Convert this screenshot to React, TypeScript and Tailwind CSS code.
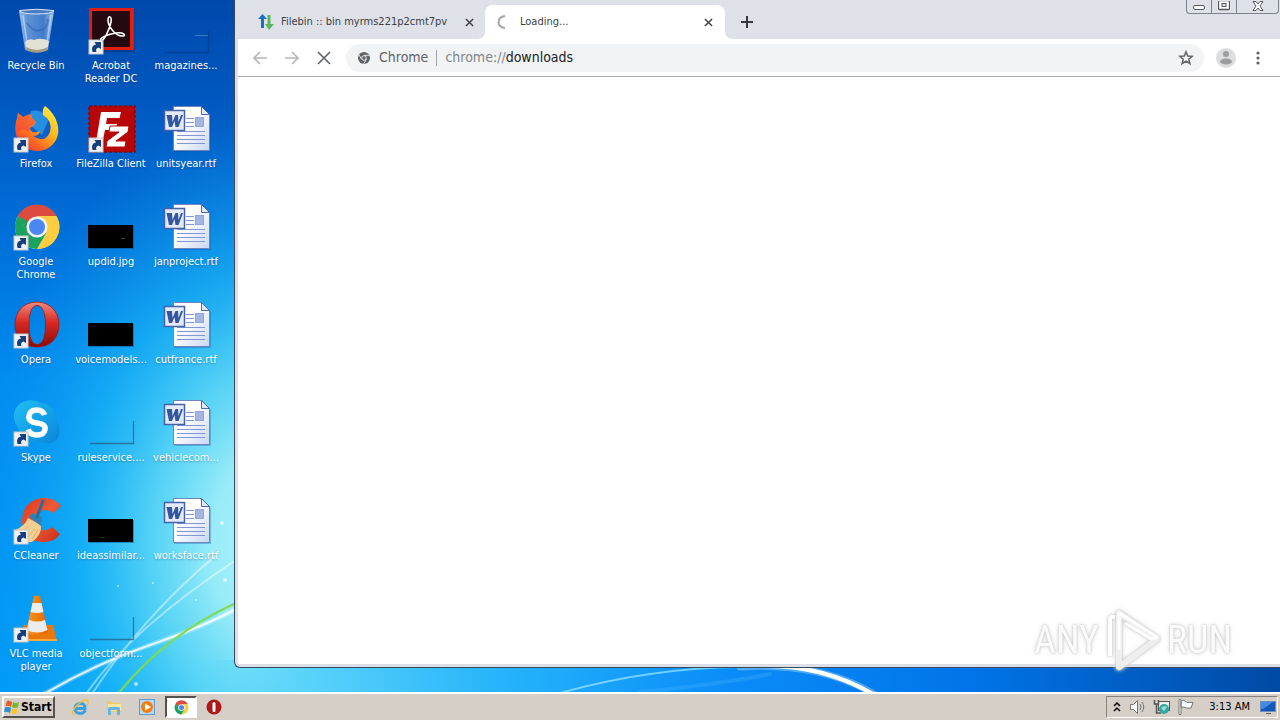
import type { ReactNode } from "react";

type IconKind =
  | "bin" | "acrobat" | "faint" | "firefox" | "filezilla" | "word" | "chrome" | "black"
  | "opera" | "skype" | "ccleaner" | "vlc" | "magazine" | "blackMark" | "blackGreen";

type DesktopItem = { label: string; icon: IconKind; shortcut?: boolean };

const items: DesktopItem[] = [
  { label: "Recycle Bin", icon: "bin" },
  { label: "Acrobat Reader DC", icon: "acrobat", shortcut: true },
  { label: "magazines...", icon: "magazine" },
  { label: "Firefox", icon: "firefox", shortcut: true },
  { label: "FileZilla Client", icon: "filezilla", shortcut: true },
  { label: "unitsyear.rtf", icon: "word" },
  { label: "Google Chrome", icon: "chrome", shortcut: true },
  { label: "updid.jpg", icon: "blackMark" },
  { label: "janproject.rtf", icon: "word" },
  { label: "Opera", icon: "opera", shortcut: true },
  { label: "voicemodels...", icon: "black" },
  { label: "cutfrance.rtf", icon: "word" },
  { label: "Skype", icon: "skype", shortcut: true },
  { label: "ruleservice....", icon: "faint" },
  { label: "vehiclecom...", icon: "word" },
  { label: "CCleaner", icon: "ccleaner", shortcut: true },
  { label: "ideassimilar...", icon: "blackGreen" },
  { label: "worksface.rtf", icon: "word" },
  { label: "VLC media player", icon: "vlc", shortcut: true },
  { label: "objectform...", icon: "faint" },
];

function Defs() {
  return (
    <svg className="absolute size-0" aria-hidden="true">
      <defs>
        <linearGradient id="glass" x1="0" x2="1">
          <stop offset="0" stopColor="#b5cfee" />
          <stop offset=".25" stopColor="#6e9fdc" />
          <stop offset=".7" stopColor="#4c84cf" />
          <stop offset="1" stopColor="#c0d6f2" />
        </linearGradient>
        <linearGradient id="ff" x1=".9" y1="0" x2=".1" y2="1">
          <stop offset="0" stopColor="#fff14a" />
          <stop offset=".4" stopColor="#ffb81f" />
          <stop offset=".7" stopColor="#ff6a1f" />
          <stop offset="1" stopColor="#ee2446" />
        </linearGradient>
        <linearGradient id="op" x1="0" y1="0" x2="0" y2="1">
          <stop offset="0" stopColor="#f08a80" />
          <stop offset=".45" stopColor="#d92a22" />
          <stop offset="1" stopColor="#8c0a08" />
        </linearGradient>
        <linearGradient id="sk" x1="0" y1="0" x2="1" y2="1">
          <stop offset="0" stopColor="#1fc0f4" />
          <stop offset="1" stopColor="#0a84dc" />
        </linearGradient>
        <linearGradient id="cc" x1="0" y1="0" x2="1" y2="1">
          <stop offset="0" stopColor="#d8381e" />
          <stop offset=".5" stopColor="#ee5a36" />
          <stop offset="1" stopColor="#c52a18" />
        </linearGradient>
        <linearGradient id="page" x1="0" y1="0" x2="1" y2="1">
          <stop offset=".4" stopColor="#ffffff" />
          <stop offset="1" stopColor="#c9d6f3" />
        </linearGradient>
        <linearGradient id="cone" x1="0" x2="1">
          <stop offset="0" stopColor="#ff9a1c" />
          <stop offset="1" stopColor="#e06400" />
        </linearGradient>
      </defs>
    </svg>
  );
}

function ChromeArt() {
  return (
    <>
      <circle cx="24" cy="24" r="22" fill="#f2f2f2" />
      <path d="M24 24 4.9 13A22 22 0 0 1 43.1 13Z" fill="#dd4b3e" />
      <path d="M24 13H43.5A22 22 0 0 1 24 46L33.5 29.5Z" fill="#ffcd40" />
      <path d="M4.9 13A22 22 0 0 0 24 46L33.5 29.5 24 34 14.5 29.5Z" fill="#1aa260" />
      <path d="M4.9 13A22 22 0 0 1 43.5 13H24A11 11 0 0 0 14.5 29.5Z" fill="#dd4b3e" />
      <path d="M4.9 13 14.5 29.5 18 20Z" fill="#1aa260" />
      <circle cx="24" cy="24" r="10.5" fill="#f5f5f5" />
      <circle cx="24" cy="24" r="8" fill="#4b87f0" />
    </>
  );
}

function Art({ kind }: { kind: IconKind }): ReactNode {
  switch (kind) {
    case "bin":
      return (
        <g>
          <path d="M7 4 13 43Q24 48 36 43L42 4Z" fill="url(#glass)" fillOpacity=".85" />
          <path d="M13 35Q17 31 22 33 29 30 37 34L35.500 42Q25 47 14 42Z" fill="#e3e0d6" />
          <path d="M14 40Q25 46 36 40L35 43.500Q25 48 15 43.500Z" fill="#a59a82" />
          <path d="M7.500 3.500Q24 1 42 3.500 40 7 24.500 7T7.500 3.500Z" fill="#4a7cc2" stroke="#dbe8f8" />
          <path d="M11 8 15 36M39 8 35 36" stroke="#d5e5f8" strokeWidth="1.500" opacity=".6" />
          <path d="M15 16Q22 26 29 23 36 21 36 12" stroke="#2557a3" strokeWidth="2" fill="none" opacity=".45" />
        </g>
      );
    case "acrobat":
      return (
        <g>
          <rect x="3" y="2" width="45" height="43" fill="#0a2a66" opacity=".4" />
          <rect x="2" y="1" width="45" height="42" fill="#e21d12" />
          <rect x="5" y="4" width="38" height="36" fill="#240a10" />
          <path
            d="M14 33C12 31 21 27 29 26 37 25 40 29 35 29 28 29 21 19 21 13 21 8 25 9 24 15 23 21 17 35 14 33Z"
            fill="none" stroke="#fff" strokeWidth="1.600"
          />
        </g>
      );
    case "magazine":
      return (
        <g fill="none">
          <path d="M2 45.500H46.500V24" stroke="#003c8c" strokeWidth="1.500" opacity=".7" />
          <path d="M33 28.500H46" stroke="#6f8fd0" opacity=".6" />
        </g>
      );
    case "faint":
      return <path d="M3 44.500H46.500V22" fill="none" stroke="#245f84" strokeWidth="1.300" opacity=".75" />;
    case "black":
    case "blackMark":
    case "blackGreen":
      return (
        <g>
          <rect x="2" y="23" width="45" height="23" fill="#063a70" opacity=".4" />
          <rect x="1" y="22" width="45" height="23" fill="#000" />
          {kind === "blackMark" && <path d="M34 35.500h4" stroke="#444" />}
          {kind === "blackGreen" && <path d="M13 40.500h5" stroke="#1d3a1d" />}
        </g>
      );
    case "firefox":
      return (
        <g>
          <circle cx="25" cy="21" r="16" fill="#145fc4" />
          <path d="M19 6Q32 3 36 16L30 30 18 20Z" fill="#2490e4" />
          <path
            d="M33 1C44 9 50 24 44 35 38 46 24 49 14 43 4 37 1 25 5 13L6 8 11 12 19 9 20 13 24 17 22 20 18 23Q18 28 25 27L28 26Q27 31 21 31 33 39 38 27 41 16 31 10 30 4 33 1Z"
            fill="url(#ff)"
          />
          <path d="M5 13 6 8 11 12 19 9 20 13 24 17 18 23 17 27Q9 22 5 28 3 22 5 13Z" fill="#f2453c" opacity=".65" />
        </g>
      );
    case "filezilla":
      return (
        <g>
          <rect x="2" y="1" width="46" height="46" fill="#b80608" stroke="#870808" strokeWidth="1.500" strokeDasharray="3 2" />
          <path d="M14 7H34L32.500 13H20L19 19H30L28.500 25H18L15.500 37H9Z" fill="#fff" />
          <path d="M23 21H42L41 27 29 36H39L38 42H19L20 36 32 27H22Z" fill="#fff" stroke="#b80608" strokeWidth="1" />
        </g>
      );
    case "word":
      return (
        <g>
          <path d="M12 3H41L49 11V47H12Z" fill="#17479a" opacity=".3" />
          <path d="M11.500 1.500H39.500L47.500 9.500V45.500H11.500Z" fill="url(#page)" stroke="#6e84bd" />
          <path d="M39.500 1.500V9.500H47.500Z" fill="#dfe8fb" stroke="#4f68a8" />
          <path d="M24 13.500h8M24 17.500h8M24 21.500h8M15 26.500h28M15 30.500h28M15 34.500h28M15 38.500h28" stroke="#8197cf" />
          <rect x="33.500" y="12.500" width="8" height="9" fill="#a3b5e0" stroke="#8fa4d8" />
          <rect x="2.500" y="5.500" width="20" height="20" fill="#e3ebfb" stroke="#4561a8" strokeWidth="1.500" />
          <path d="M4.500 10H10L10.500 17 13.500 10H16L16.500 17 19 10H21L16.500 22H13.500L12.500 16 10 22H7Z" fill="#33569f" />
        </g>
      );
    case "chrome":
      return <g transform="translate(1 0)"><ChromeArt /></g>;
    case "opera":
      return (
        <path
          d="M25 1C11 1 3 11 3 23.500S11 46 25 46 47 36 47 23.500 38 1 25 1ZM25 4.500C31 4.500 33.500 13 33.500 24S31 43.500 25 43.500 17 34 17 24 19 4.500 25 4.500Z"
          fill="url(#op)" fillRule="evenodd" stroke="#a01812" strokeWidth=".8"
        />
      );
    case "skype":
      return (
        <g>
          <path d="M14 2Q22 0 29 4 43 5 44 21 50 31 46 39 40 47 30 43 12 45 6 29-1 18 4 9 8 3 14 2Z" fill="url(#sk)" />
          <path d="M32.500 16Q31 11 24.500 11T17 17 25 24 33 30.500 25 36 16 30.500" fill="none" stroke="#fff" strokeWidth="5.500" />
        </g>
      );
    case "ccleaner":
      return (
        <g>
          <path d="M49 9Q42 0 30 1 10 4 10 25 12 44 30 45 42 46 48 37L40 30Q36 34 31 33 23 31 24 23 25 14 33 13 38 13 41 16Z" fill="url(#cc)" />
          <path d="M3 33Q13 29 16 21L29 28Q30 38 20 45L6 46Z" fill="#f4cf92" />
          <path d="M9 36 17 29M15 41 23 32M20 42 26 33" stroke="#dcb273" />
          <path d="M17 20 20 16 30 20 29 29Z" fill="#2d83b5" />
          <path d="M25 20 31 4" stroke="#286c9c" strokeWidth="3" strokeLinecap="round" />
        </g>
      );
    case "vlc":
      return (
        <g>
          <path d="M12 30H41L45 46H8Z" fill="#e9770b" />
          <path d="M9 44H44.500L45 46H8Z" fill="#ffa836" />
          <path d="M22 1Q25 0 28 1L36 37Q25 43 14 37Z" fill="url(#cone)" />
          <path d="M20.500 8H29.500L31.500 17Q25 19 18.500 17ZM17 25Q25 28 33 25L35.500 35Q25 40 15 35Z" fill="#ececec" />
        </g>
      );
  }
}

function DesktopIcon({ item }: { item: DesktopItem }) {
  return (
    <button type="button" className="flex h-[98px] flex-col items-center text-center">
      <svg viewBox="0 0 48 48" className="size-12 shrink-0 overflow-visible" aria-hidden="true">
        <Art kind={item.icon} />
        {item.shortcut && (
          <g>
            <rect x="2" y="33" width="14" height="14" fill="#f1f1f1" stroke="#c4c8ce" />
            <path d="M5.500 45Q3.500 38.500 9 37.500L7.500 35H14V42L11.500 40.500Q8 41.500 9.500 45Z" fill="#163f80" />
          </g>
        )}
      </svg>
      <span className="mt-1 text-[11px] leading-[13px] text-white [text-shadow:0_1px_2px_rgba(0,40,90,.4)]">
        {item.label}
      </span>
    </button>
  );
}

function Wallpaper() {
  return (
    <svg className="absolute inset-0 size-full" viewBox="0 0 1280 692" preserveAspectRatio="none" aria-hidden="true">
      <defs>
        <linearGradient id="sky" x1="0" y1="0" x2="0" y2="1">
          <stop offset="0" stopColor="#0048ac" />
          <stop offset=".28" stopColor="#0068d2" />
          <stop offset=".55" stopColor="#008cf0" />
          <stop offset="1" stopColor="#009cf8" />
        </linearGradient>
        <radialGradient id="glow" gradientUnits="userSpaceOnUse" cx="0" cy="0" r="1" gradientTransform="translate(280 545) scale(310 440)">
          <stop offset="0" stopColor="#b0f4fa" />
          <stop offset=".22" stopColor="#98ecf8" />
          <stop offset=".42" stopColor="#5cd8f6" stopOpacity=".9" />
          <stop offset=".65" stopColor="#20bef8" stopOpacity=".6" />
          <stop offset="1" stopColor="#1094ea" stopOpacity="0" />
        </radialGradient>
        <linearGradient id="strip" x1="0" x2="1">
          <stop offset="0" stopColor="#5cd8fa" stopOpacity="0" />
          <stop offset=".12" stopColor="#58d2fa" />
          <stop offset=".3" stopColor="#24b2fa" />
          <stop offset=".5" stopColor="#0a8cf8" />
          <stop offset=".72" stopColor="#0074e8" />
          <stop offset="1" stopColor="#004aa4" />
        </linearGradient>
      </defs>
      <rect width="1280" height="692" fill="url(#sky)" />
      <rect width="700" height="692" fill="url(#glow)" />
      <rect x="180" y="660" width="1100" height="32" fill="url(#strip)" />
      <g fill="none" strokeLinecap="round">
        <path d="M44 694Q95 664 150 645T236 609" stroke="#fff" strokeWidth="5" opacity=".25" />
        <path d="M44 694Q95 664 150 645T236 609" stroke="#fff" strokeWidth="2" opacity=".8" />
        <path d="M86 694Q130 630 236 560M92 694Q140 620 215 556" stroke="#fff" strokeWidth="2" opacity=".45" />
        <path d="M118 694Q165 635 236 603" stroke="#7fdc50" strokeWidth="2" />
        <path d="M560 693Q650 668 740 667" stroke="#8be0ff" strokeWidth="2" opacity=".8" />
        <path d="M740 667Q820 662 874 694" stroke="#fff" strokeWidth="7" opacity=".3" />
        <path d="M760 666Q820 664 873 694" stroke="#fff" strokeWidth="4" />
        <path d="M640 692Q720 684 770 674" stroke="#4ab2ff" strokeWidth="4" opacity=".3" />
      </g>
      <g fill="#fff" opacity=".6">
        <circle cx="222" cy="523" r="2" /><circle cx="225" cy="580" r="2" /><circle cx="118" cy="586" r="1" />
        <circle cx="153" cy="583" r="1" /><circle cx="136" cy="684" r="2" /><circle cx="196" cy="600" r="1" />
      </g>
    </svg>
  );
}

function CloseGlyph({ className }: { className: string }) {
  return (
    <svg viewBox="0 0 10 10" className={className} aria-hidden="true">
      <path d="M1 1 9 9M9 1 1 9" stroke="currentColor" strokeWidth="1.600" />
    </svg>
  );
}

function TabStrip() {
  return (
    <div className="flex h-[39px] items-end bg-[#dee1e8] pl-2">
      <div className="flex h-[34px] w-[239px] items-center pr-[11px] pl-3 text-[#3c4043]">
        <svg viewBox="0 0 16 16" className="size-4" aria-hidden="true">
          <path d="M4.500 0 9 5H6V14H3V5H0Z" fill="#1b6ec2" />
          <path d="M9.500 1H12.500V10H16L11 16 7 10H9.500Z" fill="#5cb85c" />
        </svg>
        <span className="ml-[7px] flex-1 whitespace-nowrap text-[11px]">Filebin :: bin myrms221p2cmt7pv</span>
        <button type="button" aria-label="Close Filebin tab"><CloseGlyph className="size-[9px]" /></button>
      </div>
      <div className="relative flex h-[34px] w-[240px] items-center rounded-t-lg bg-white pr-3 pl-[11px] text-[#3c4043]">
        <svg viewBox="0 0 8 8" className="absolute bottom-0 -left-2 size-2" aria-hidden="true"><path d="M8 0V8H0Q8 8 8 0Z" fill="#fff" /></svg>
        <svg viewBox="0 0 8 8" className="absolute -right-2 bottom-0 size-2" aria-hidden="true"><path d="M0 0V8H8Q0 8 0 0Z" fill="#fff" /></svg>
        <svg viewBox="0 0 16 16" className="size-4" aria-hidden="true">
          <path d="M9 2Q2.500 3 2.500 8T9 14" fill="none" stroke="#a6a8ab" strokeWidth="2" />
        </svg>
        <span className="ml-2 flex-1 text-[11px]">Loading...</span>
        <button type="button" aria-label="Close Loading tab"><CloseGlyph className="size-[9px]" /></button>
      </div>
      <button type="button" aria-label="New tab" className="flex h-[34px] w-11 items-center justify-center text-[#35383c]">
        <svg viewBox="0 0 12 12" className="size-3" aria-hidden="true"><path d="M6 0V12M0 6H12" stroke="currentColor" strokeWidth="2" /></svg>
      </button>
      <div className="mr-px ml-auto flex h-[14px] self-start rounded-b border border-t-0 border-[#7d838c] text-[#55595f]">
        <button type="button" aria-label="Minimize" className="flex w-6 items-center justify-center">
          <svg viewBox="0 0 12 12" className="size-3" aria-hidden="true"><rect x=".5" y="4.500" width="11" height="4" rx="1.500" fill="#fff" stroke="currentColor" /></svg>
        </button>
        <button type="button" aria-label="Restore" className="flex w-[26px] items-center justify-center border-x border-[#7d838c]">
          <svg viewBox="0 0 12 12" className="size-3" aria-hidden="true">
            <rect x=".5" y="-.5" width="11" height="9" rx="1" fill="#fff" stroke="currentColor" strokeWidth="1.300" /><rect x="4" y="2.500" width="4" height="3" fill="#dee1e8" stroke="currentColor" />
          </svg>
        </button>
        <button type="button" aria-label="Close" className="flex w-[41px] items-center justify-center">
          <svg viewBox="0 0 12 12" className="size-3" aria-hidden="true">
            <path d="M1 .5H4L6 3 8 .5H11L8 5 11 9.500H8L6 7 4 9.500H1L4 5Z" fill="#fff" stroke="currentColor" />
          </svg>
        </button>
      </div>
    </div>
  );
}

function Toolbar() {
  return (
    <div className="flex h-[38px] items-center border-b border-[#a9abae] bg-white pr-[14px] pl-[14px]">
      <button type="button" aria-label="Back" className="text-[#b4b6b9]">
        <svg viewBox="0 0 16 16" className="size-4" aria-hidden="true"><path d="M15 8H2M8 2 2 8 8 14" fill="none" stroke="currentColor" strokeWidth="1.600" /></svg>
      </button>
      <button type="button" aria-label="Forward" className="ml-4 text-[#b4b6b9]">
        <svg viewBox="0 0 16 16" className="size-4" aria-hidden="true"><path d="M1 8H14M8 2 14 8 8 14" fill="none" stroke="currentColor" strokeWidth="1.600" /></svg>
      </button>
      <button type="button" aria-label="Stop" className="ml-[17px] text-[#5f6368]">
        <svg viewBox="0 0 14 14" className="size-[14px]" aria-hidden="true"><path d="M1 1 13 13M13 1 1 13" stroke="currentColor" strokeWidth="1.600" /></svg>
      </button>
      <div className="ml-[15px] flex h-7 min-w-0 flex-1 items-center rounded-full bg-[#f1f3f4] pr-[10px] pl-3 text-[14px] text-[#5f6368]">
        <svg viewBox="0 0 12 12" className="size-3" aria-hidden="true">
          <circle cx="6" cy="6" r="6" fill="#5f6368" />
          <path d="M6 3.300H11.300M3.700 7.400 1 2.800M8.400 7.300 5.700 11.800" stroke="#f1f3f4" strokeWidth=".9" />
          <circle cx="6" cy="6" r="2.300" fill="#5f6368" stroke="#f1f3f4" strokeWidth=".9" />
        </svg>
        <span className="ml-[9px]">Chrome</span>
        <span className="mx-2 h-4 w-px bg-[#a0a3a7]" />
        <span className="flex-1 text-[#80868b]">chrome://<span className="text-[#202124]">downloads</span></span>
        <button type="button" aria-label="Bookmark this page">
          <svg viewBox="0 0 16 16" className="size-4" aria-hidden="true">
            <path d="M8 1.800 9.700 6 14.200 6.300 10.800 9.200 11.900 13.700 8 11.200 4.100 13.700 5.200 9.200 1.800 6.300 6.300 6Z" fill="none" stroke="currentColor" strokeWidth="1.500" />
          </svg>
        </button>
      </div>
      <button type="button" aria-label="Profile" className="ml-3">
        <svg viewBox="0 0 20 20" className="size-5" aria-hidden="true">
          <circle cx="10" cy="10" r="10" fill="#dcdddf" /><circle cx="10" cy="6" r="3" fill="#9b9da1" /><ellipse cx="10" cy="13.500" rx="6" ry="3" fill="#9b9da1" />
        </svg>
      </button>
      <button type="button" aria-label="Menu" className="ml-[14px]">
        <svg viewBox="0 0 16 16" className="size-4" aria-hidden="true" fill="#5f6368">
          <circle cx="8" cy="3" r="1.600" /><circle cx="8" cy="8" r="1.600" /><circle cx="8" cy="13" r="1.600" />
        </svg>
      </button>
    </div>
  );
}

function Watermark() {
  return (
    <div className="pointer-events-none absolute right-12 bottom-5 flex items-center text-[38px] leading-none text-[#fbfbfb] [filter:drop-shadow(0_0_1px_#c4c4c4)_drop-shadow(0_0_2px_#dddddd)] font-['Roboto_Condensed','Liberation_Sans',sans-serif]">
      <span>ANY</span>
      <svg viewBox="0 0 56 64" className="mx-[6px] h-16 w-14" aria-hidden="true">
        <path d="M5 48V12Q5 8 10 9" fill="none" stroke="#fff" strokeWidth="4" />
        <path d="M14 5V59L52 31Z" fill="none" stroke="#eeeeee" strokeWidth="6" strokeLinejoin="round" />
        <path d="M14 42V5L52 29 46 31 20 15" fill="none" stroke="#fff" strokeWidth="3" strokeLinejoin="round" />
      </svg>
      <span>RUN</span>
    </div>
  );
}

function Taskbar() {
  return (
    <footer className="relative flex h-7 shrink-0 items-center border-t-2 border-white bg-[#d5cfc8] px-[2px] text-black">
      <button type="button" className="flex h-[22px] w-[53px] items-center gap-px overflow-hidden border-2 border-t-white border-r-[#55514d] border-b-[#55514d] border-l-white">
        <svg viewBox="0 0 16 16" className="size-4 shrink-0" aria-hidden="true">
          <path d="M3 2Q5 1 8 3L7 8Q4 6 1.500 7Z" fill="#ed5a24" /><path d="M9 3Q12 5 15 3L14 8Q11 10 8 8Z" fill="#78b72c" />
          <path d="M1 8.500Q4 7.500 7 9L6 14Q3 12 0 13Z" fill="#2e8bd6" /><path d="M8 9.500Q11 11 14 9.500L12.500 14Q10 16 7 14Z" fill="#fbc525" />
        </svg>
        <span className="text-[12px] leading-4 font-bold">Start</span>
      </button>
      <div className="ml-4 flex items-center">
        <button type="button" aria-label="Internet Explorer">
          <svg viewBox="0 0 18 18" className="size-[18px]" aria-hidden="true">
            <path d="M14.500 12.500Q12.500 15.500 9 15.500 4 15 4 10.500T9 5.500 14 10.500H5" fill="none" stroke="#3ba0e0" strokeWidth="3" />
            <path d="M3 17Q-1 14 6 7.500T16.500 2Q18 4 16 7.500" fill="none" stroke="#f2c12e" strokeWidth="1.500" />
          </svg>
        </button>
        <button type="button" aria-label="Windows Explorer" className="ml-4">
          <svg viewBox="0 0 18 18" className="size-[18px]" aria-hidden="true">
            <path d="M2 3H7L8 5H16V14H2Z" fill="#eccb68" /><path d="M3 6H16V13H3Z" fill="#f9e6a0" />
            <path d="M3 17V11Q3 9 5 9H13Q15 9 15 11V17H12V12H6V17Z" fill="#65b5e6" />
          </svg>
        </button>
        <button type="button" aria-label="Windows Media Player" className="ml-4">
          <svg viewBox="0 0 16 16" className="size-4" aria-hidden="true">
            <rect x=".5" y=".5" width="15" height="15" fill="#b7d8f1" stroke="#5e9bd0" /><circle cx="8" cy="8" r="6" fill="#f07f13" /><path d="M6 4.500V11.500L12 8Z" fill="#fff" />
          </svg>
        </button>
        <button type="button" aria-label="Google Chrome" className="ml-[10px] flex h-[22px] w-8 items-center justify-center border-2 border-t-[#55514d] border-r-white border-b-white border-l-[#55514d] bg-white">
          <svg viewBox="0 0 48 48" className="size-[15px]" aria-hidden="true"><ChromeArt /></svg>
        </button>
        <button type="button" aria-label="Opera" className="ml-[9px]">
          <svg viewBox="0 0 16 16" className="size-4" aria-hidden="true"><circle cx="8" cy="8" r="7.500" fill="#b01618" /><rect x="6.500" y="3" width="3" height="10" rx="1.500" fill="#fff" /></svg>
        </button>
      </div>
      <div className="ml-auto flex h-[22px] items-center border border-t-[#85817c] border-r-white border-b-white border-l-[#85817c] pl-[2px]">
        <button type="button" aria-label="Show hidden icons">
          <svg viewBox="0 0 8 10" className="mx-1 h-[10px] w-2" aria-hidden="true"><path d="M1 4 4 1 7 4M1 9 4 6 7 9" fill="none" stroke="#000" strokeWidth="1.500" /></svg>
        </button>
        <button type="button" aria-label="Volume" className="ml-1">
          <svg viewBox="0 0 18 18" className="size-[18px]" aria-hidden="true">
            <path d="M1.500 6.500H4.500L8.500 2.500V15.500L4.500 11.500H1.500Z" fill="#fff" stroke="#777" /><path d="M11 6Q13 9 11 12M13 4Q16.500 9 13 14" fill="none" stroke="#777" />
          </svg>
        </button>
        <button type="button" aria-label="Network" className="ml-[6px]">
          <svg viewBox="0 0 18 18" className="size-[18px]" aria-hidden="true">
            <rect x="5.500" y="3.500" width="11" height="9" fill="#eee" stroke="#555" /><path d="M1.500 2V6H5.500V2M3.500 6V15H8" fill="none" stroke="#555" strokeWidth="1.500" />
            <circle cx="11" cy="11" r="5" fill="#35a8a0" /><path d="M8 10Q11 7 14 9L11 13Z" fill="#9ae0dc" />
          </svg>
        </button>
        <button type="button" aria-label="Action Center" className="ml-[6px]">
          <svg viewBox="0 0 18 18" className="size-[18px]" aria-hidden="true">
            <path d="M2 1.500H4V16.500H2ZM4 3Q7 1.500 9 3.500L10 4.500H16L14 10H9Q7 8 4 9.500Z" fill="#fff" stroke="#777" />
          </svg>
        </button>
        <time className="ml-[14px] text-[11px]">3:13 AM</time>
        <button type="button" aria-label="Show desktop" className="ml-[9px]">
          <svg viewBox="0 0 18 16" className="h-4 w-[18px]" aria-hidden="true">
            <rect x="1.500" y="2.500" width="15" height="10" fill="#1556b8" stroke="#6b90c4" /><path d="M2 3H14L4 10H2Z" fill="#468be2" /><path d="M7 14.500H12" stroke="#555" />
          </svg>
        </button>
      </div>
    </footer>
  );
}

export default function App() {
  return (
    <div className="relative flex h-screen flex-col overflow-hidden [font-family:'DejaVu_Sans_Condensed','DejaVu_Sans',sans-serif]">
      <Defs />
      <main className="relative flex min-h-0 flex-1 overflow-hidden">
        <Wallpaper />
        <nav aria-label="Desktop" className="relative grid w-[234px] shrink-0 grid-cols-[repeat(3,72px)] content-start gap-x-[3px] pt-[7px]">
          {items.map((item) => <DesktopIcon key={item.label} item={item} />)}
        </nav>
        <section aria-label="Browser" className="relative mb-6 flex min-w-0 flex-1 flex-col overflow-hidden rounded-bl-md border-b border-l border-[#38495c] bg-[#dcdfe5] pb-[3px] pl-[3px]">
          <TabStrip />
          <Toolbar />
          <div className="flex-1 bg-white" />
        </section>
        <Watermark />
      </main>
      <Taskbar />
    </div>
  );
}
